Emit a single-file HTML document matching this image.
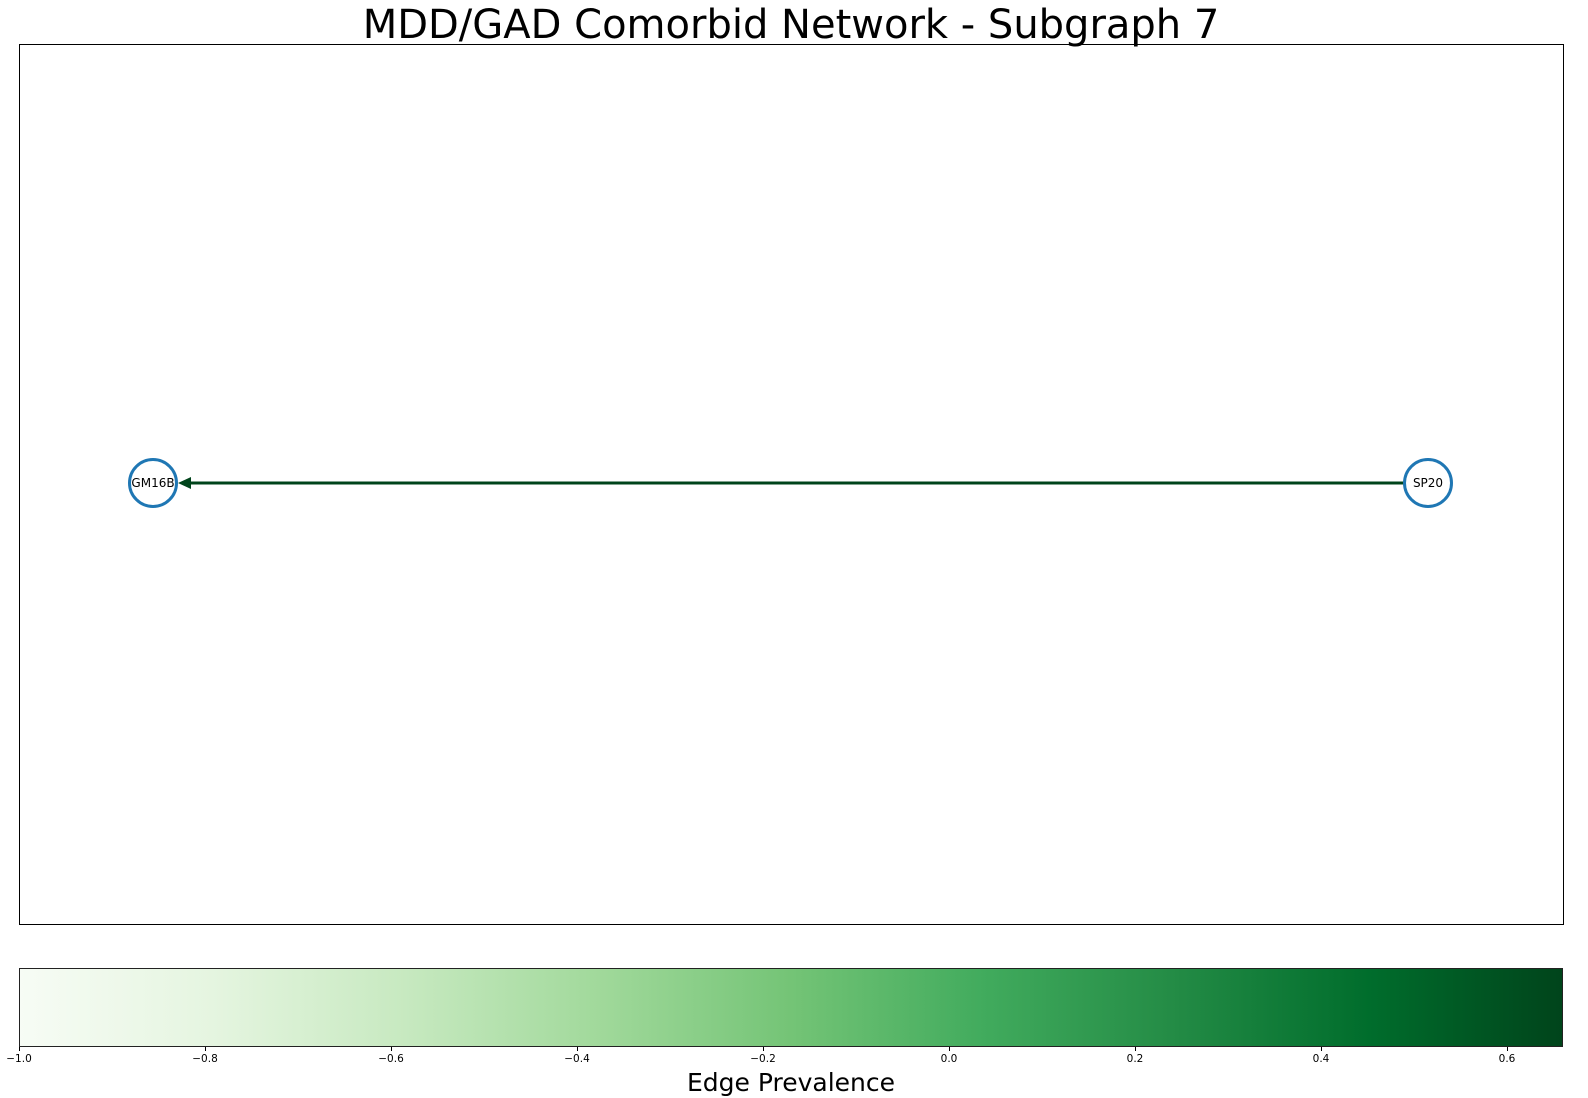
<!DOCTYPE html>
<html><head><style>body{margin:0;background:#fff;}svg{display:block}</style></head><body>
<svg width="1588" height="1098" xmlns="http://www.w3.org/2000/svg" font-family="DejaVu Sans, Liberation Sans, sans-serif">
<defs><linearGradient id="g" x1="0" x2="1" y1="0" y2="0">
<stop offset="0" stop-color="#f7fcf5"/><stop offset="0.125" stop-color="#e5f5e0"/><stop offset="0.25" stop-color="#c7e9c0"/><stop offset="0.375" stop-color="#a1d99b"/><stop offset="0.5" stop-color="#74c476"/><stop offset="0.625" stop-color="#41ab5d"/><stop offset="0.75" stop-color="#238b45"/><stop offset="0.875" stop-color="#006d2c"/><stop offset="1" stop-color="#00441b"/></linearGradient></defs>
<text x="791" y="38" font-size="40" text-anchor="middle">MDD/GAD Comorbid Network - Subgraph 7</text>
<rect x="19.5" y="44.5" width="1544" height="880" fill="none" stroke="#000" stroke-width="1"/>
<line x1="1404" y1="483" x2="190" y2="483" stroke="#00441b" stroke-width="3"/>
<polygon points="178,483 191,477 191,489" fill="#00441b"/>
<circle cx="153" cy="483" r="23.5" fill="#fff" stroke="#1f77b4" stroke-width="3"/>
<circle cx="1428" cy="483" r="23.5" fill="#fff" stroke="#1f77b4" stroke-width="3"/>
<text x="153" y="487" font-size="12" text-anchor="middle">GM16B</text>
<text x="1428" y="487" font-size="12" text-anchor="middle">SP20</text>
<rect x="19.5" y="968.5" width="1543" height="78" fill="url(#g)" stroke="#222" stroke-width="1"/>
<g stroke="#000">
<line x1="19.5" y1="1047" x2="19.5" y2="1051"/><line x1="205.5" y1="1047" x2="205.5" y2="1051"/><line x1="391.5" y1="1047" x2="391.5" y2="1051"/><line x1="577.5" y1="1047" x2="577.5" y2="1051"/><line x1="763.5" y1="1047" x2="763.5" y2="1051"/><line x1="949.5" y1="1047" x2="949.5" y2="1051"/><line x1="1135.5" y1="1047" x2="1135.5" y2="1051"/><line x1="1321.5" y1="1047" x2="1321.5" y2="1051"/><line x1="1507.5" y1="1047" x2="1507.5" y2="1051"/>
</g>
<g font-size="10.5" text-anchor="middle" fill="#000">
<text x="19" y="1062">−1.0</text><text x="205" y="1062">−0.8</text><text x="391" y="1062">−0.6</text><text x="577" y="1062">−0.4</text><text x="763" y="1062">−0.2</text><text x="949" y="1062">0.0</text><text x="1135" y="1062">0.2</text><text x="1321" y="1062">0.4</text><text x="1507" y="1062">0.6</text>
</g>
<text x="791" y="1091" font-size="25" text-anchor="middle">Edge Prevalence</text>
</svg>
</body></html>
